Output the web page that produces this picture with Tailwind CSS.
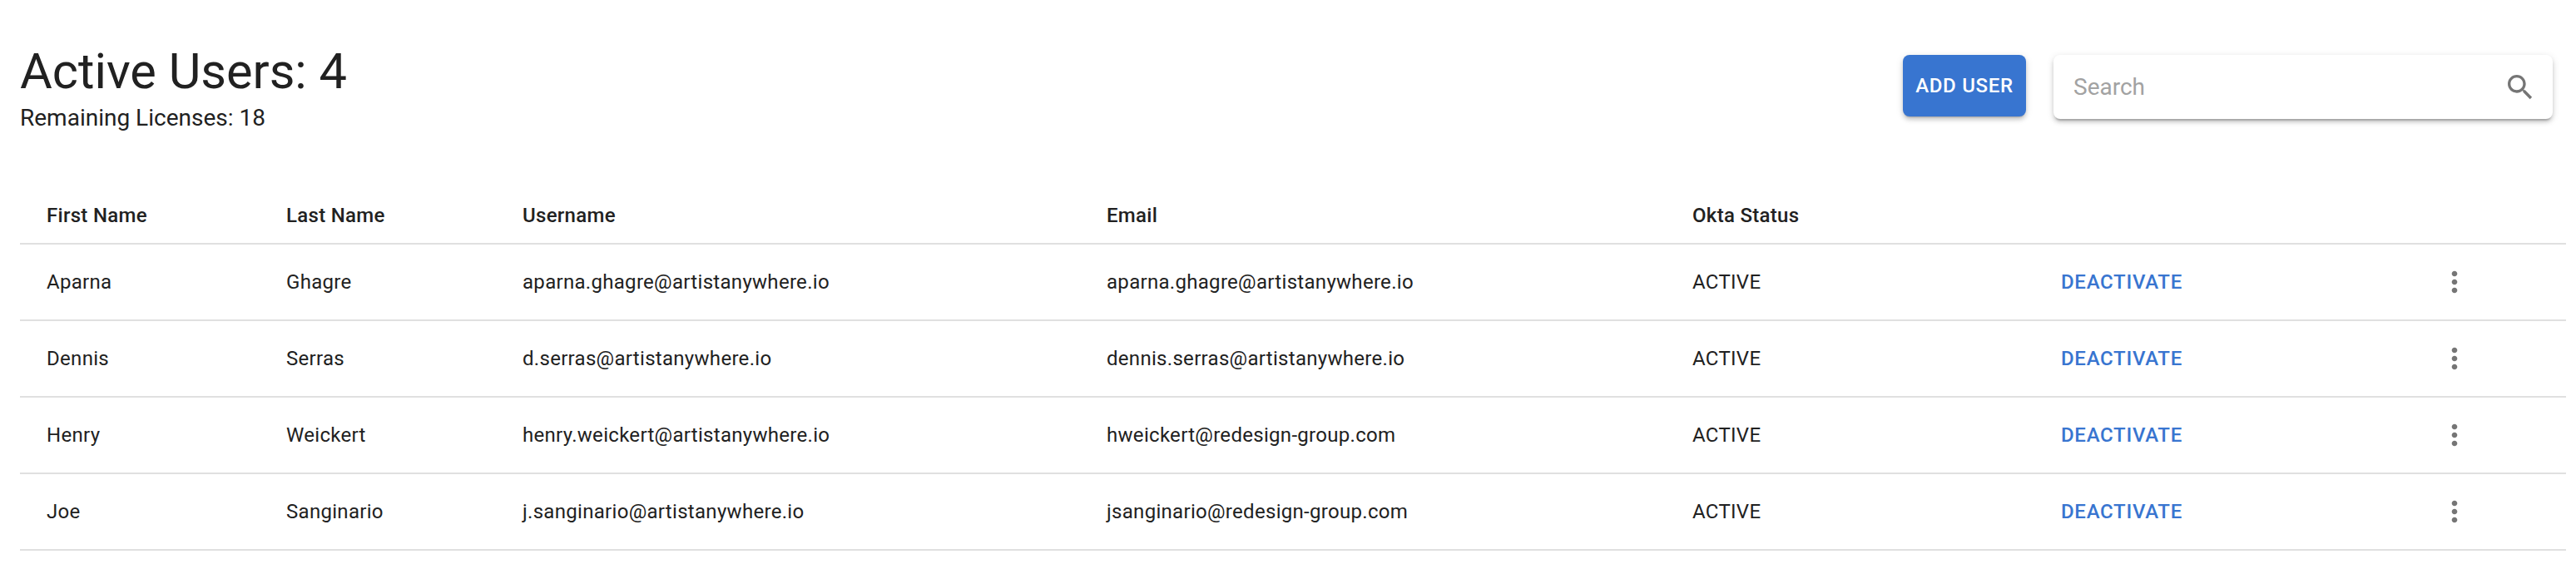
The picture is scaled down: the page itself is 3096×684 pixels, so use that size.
<!doctype html>
<html>
  <head>
    <meta charset="utf-8" />
    <script src="https://cdn.jsdelivr.net/npm/@tailwindcss/browser@4"></script>
    <title>Active Users</title>
  </head>
  <body class="bg-white font-['Roboto',sans-serif] text-[#212121]">
    <div class="pl-[24px] pr-[12px] pt-[48px]">
      <!-- Header -->
      <div class="flex items-start justify-between h-[146px]">
        <div>
          <h1 class="text-[59.5px] leading-[72px] font-normal mt-[2px]">Active Users: 4</h1>
          <p class="text-[28px] leading-[40px] mt-[0px]">Remaining Licenses: 18</p>
        </div>
        <div class="flex items-start gap-[33px] pt-[18px] pr-[16px]">
          <button class="w-[148px] h-[74px] rounded-[8px] bg-[#3875d0] text-white text-[24px] font-medium tracking-[0.7px] shadow-[0_3px_2px_-2px_rgba(0,0,0,0.2),0_4px_5px_0_rgba(0,0,0,0.14),0_2px_10px_0_rgba(0,0,0,0.12)]">ADD USER</button>
          <div class="w-[600px] h-[77px] rounded-[8px] bg-white flex items-center justify-between pl-[24px] pr-[19px] shadow-[0_4px_2px_-2px_rgba(0,0,0,0.2),0_4px_5px_0_rgba(0,0,0,0.14),0_2px_10px_0_rgba(0,0,0,0.12)]">
            <span class="text-[28px] text-[#a2a2a2]">Search</span>
            <svg class="w-[40px] h-[40px] fill-[#757575]" viewBox="0 0 24 24"><path d="M15.5 14h-.79l-.28-.27C15.41 12.59 16 11.11 16 9.5 16 5.91 13.09 3 9.5 3S3 5.91 3 9.5 5.91 16 9.5 16c1.61 0 3.09-.59 4.23-1.57l.27.28v.79l5 4.99L20.49 19l-4.99-5zm-6 0C7.01 14 5 11.99 5 9.5S7.01 5 9.5 5 14 7.01 14 9.5 11.99 14 9.5 14z" /></svg>
          </div>
        </div>
      </div>

      <!-- Users table -->
      <table class="w-full table-fixed border-collapse text-[24px] leading-[32px] tracking-[0.3px]">
        <colgroup>
          <col class="w-[288px]" />
          <col class="w-[284px]" />
          <col class="w-[702px]" />
          <col class="w-[704px]" />
          <col class="w-[411px]" />
          <col class="w-[420px]" />
          <col />
        </colgroup>
        <thead>
          <tr class="h-[99px] border-b-2 border-[#e0e0e0] text-left">
            <th class="pl-[32px] pb-[17px] align-bottom font-medium">First Name</th>
            <th class="pl-[32px] pb-[17px] align-bottom font-medium">Last Name</th>
            <th class="pl-[32px] pb-[17px] align-bottom font-medium">Username</th>
            <th class="pl-[32px] pb-[17px] align-bottom font-medium">Email</th>
            <th class="pl-[32px] pb-[17px] align-bottom font-medium">Okta Status</th>
            <th></th>
            <th></th>
          </tr>
        </thead>
        <tbody>
          <tr class="h-[92px] border-b-2 border-[#e0e0e0]">
            <td class="pl-[32px]">Aparna</td>
            <td class="pl-[32px]">Ghagre</td>
            <td class="pl-[32px]">aparna.ghagre@artistanywhere.io</td>
            <td class="pl-[32px]">aparna.ghagre@artistanywhere.io</td>
            <td class="pl-[32px]">ACTIVE</td>
            <td class="pl-[64px] font-medium text-[#3875d0] tracking-[0.7px]">DEACTIVATE</td>
            <td class="pl-[97px]"><svg class="w-[40px] h-[40px] fill-[#757575]" viewBox="0 0 24 24"><path d="M12 8c1.1 0 2-.9 2-2s-.9-2-2-2-2 .9-2 2 .9 2 2 2zm0 2c-1.1 0-2 .9-2 2s.9 2 2 2 2-.9 2-2-.9-2-2-2zm0 6c-1.1 0-2 .9-2 2s.9 2 2 2 2-.9 2-2-.9-2-2-2z" /></svg></td>
          </tr>
          <tr class="h-[92px] border-b-2 border-[#e0e0e0]">
            <td class="pl-[32px]">Dennis</td>
            <td class="pl-[32px]">Serras</td>
            <td class="pl-[32px]">d.serras@artistanywhere.io</td>
            <td class="pl-[32px]">dennis.serras@artistanywhere.io</td>
            <td class="pl-[32px]">ACTIVE</td>
            <td class="pl-[64px] font-medium text-[#3875d0] tracking-[0.7px]">DEACTIVATE</td>
            <td class="pl-[97px]"><svg class="w-[40px] h-[40px] fill-[#757575]" viewBox="0 0 24 24"><path d="M12 8c1.1 0 2-.9 2-2s-.9-2-2-2-2 .9-2 2 .9 2 2 2zm0 2c-1.1 0-2 .9-2 2s.9 2 2 2 2-.9 2-2-.9-2-2-2zm0 6c-1.1 0-2 .9-2 2s.9 2 2 2 2-.9 2-2-.9-2-2-2z" /></svg></td>
          </tr>
          <tr class="h-[92px] border-b-2 border-[#e0e0e0]">
            <td class="pl-[32px]">Henry</td>
            <td class="pl-[32px]">Weickert</td>
            <td class="pl-[32px]">henry.weickert@artistanywhere.io</td>
            <td class="pl-[32px]">hweickert@redesign-group.com</td>
            <td class="pl-[32px]">ACTIVE</td>
            <td class="pl-[64px] font-medium text-[#3875d0] tracking-[0.7px]">DEACTIVATE</td>
            <td class="pl-[97px]"><svg class="w-[40px] h-[40px] fill-[#757575]" viewBox="0 0 24 24"><path d="M12 8c1.1 0 2-.9 2-2s-.9-2-2-2-2 .9-2 2 .9 2 2 2zm0 2c-1.1 0-2 .9-2 2s.9 2 2 2 2-.9 2-2-.9-2-2-2zm0 6c-1.1 0-2 .9-2 2s.9 2 2 2 2-.9 2-2-.9-2-2-2z" /></svg></td>
          </tr>
          <tr class="h-[92px] border-b-2 border-[#e0e0e0]">
            <td class="pl-[32px]">Joe</td>
            <td class="pl-[32px]">Sanginario</td>
            <td class="pl-[32px]">j.sanginario@artistanywhere.io</td>
            <td class="pl-[32px]">jsanginario@redesign-group.com</td>
            <td class="pl-[32px]">ACTIVE</td>
            <td class="pl-[64px] font-medium text-[#3875d0] tracking-[0.7px]">DEACTIVATE</td>
            <td class="pl-[97px]"><svg class="w-[40px] h-[40px] fill-[#757575]" viewBox="0 0 24 24"><path d="M12 8c1.1 0 2-.9 2-2s-.9-2-2-2-2 .9-2 2 .9 2 2 2zm0 2c-1.1 0-2 .9-2 2s.9 2 2 2 2-.9 2-2-.9-2-2-2zm0 6c-1.1 0-2 .9-2 2s.9 2 2 2 2-.9 2-2-.9-2-2-2z" /></svg></td>
          </tr>
        </tbody>
      </table>
    </div>
  </body>
</html>
